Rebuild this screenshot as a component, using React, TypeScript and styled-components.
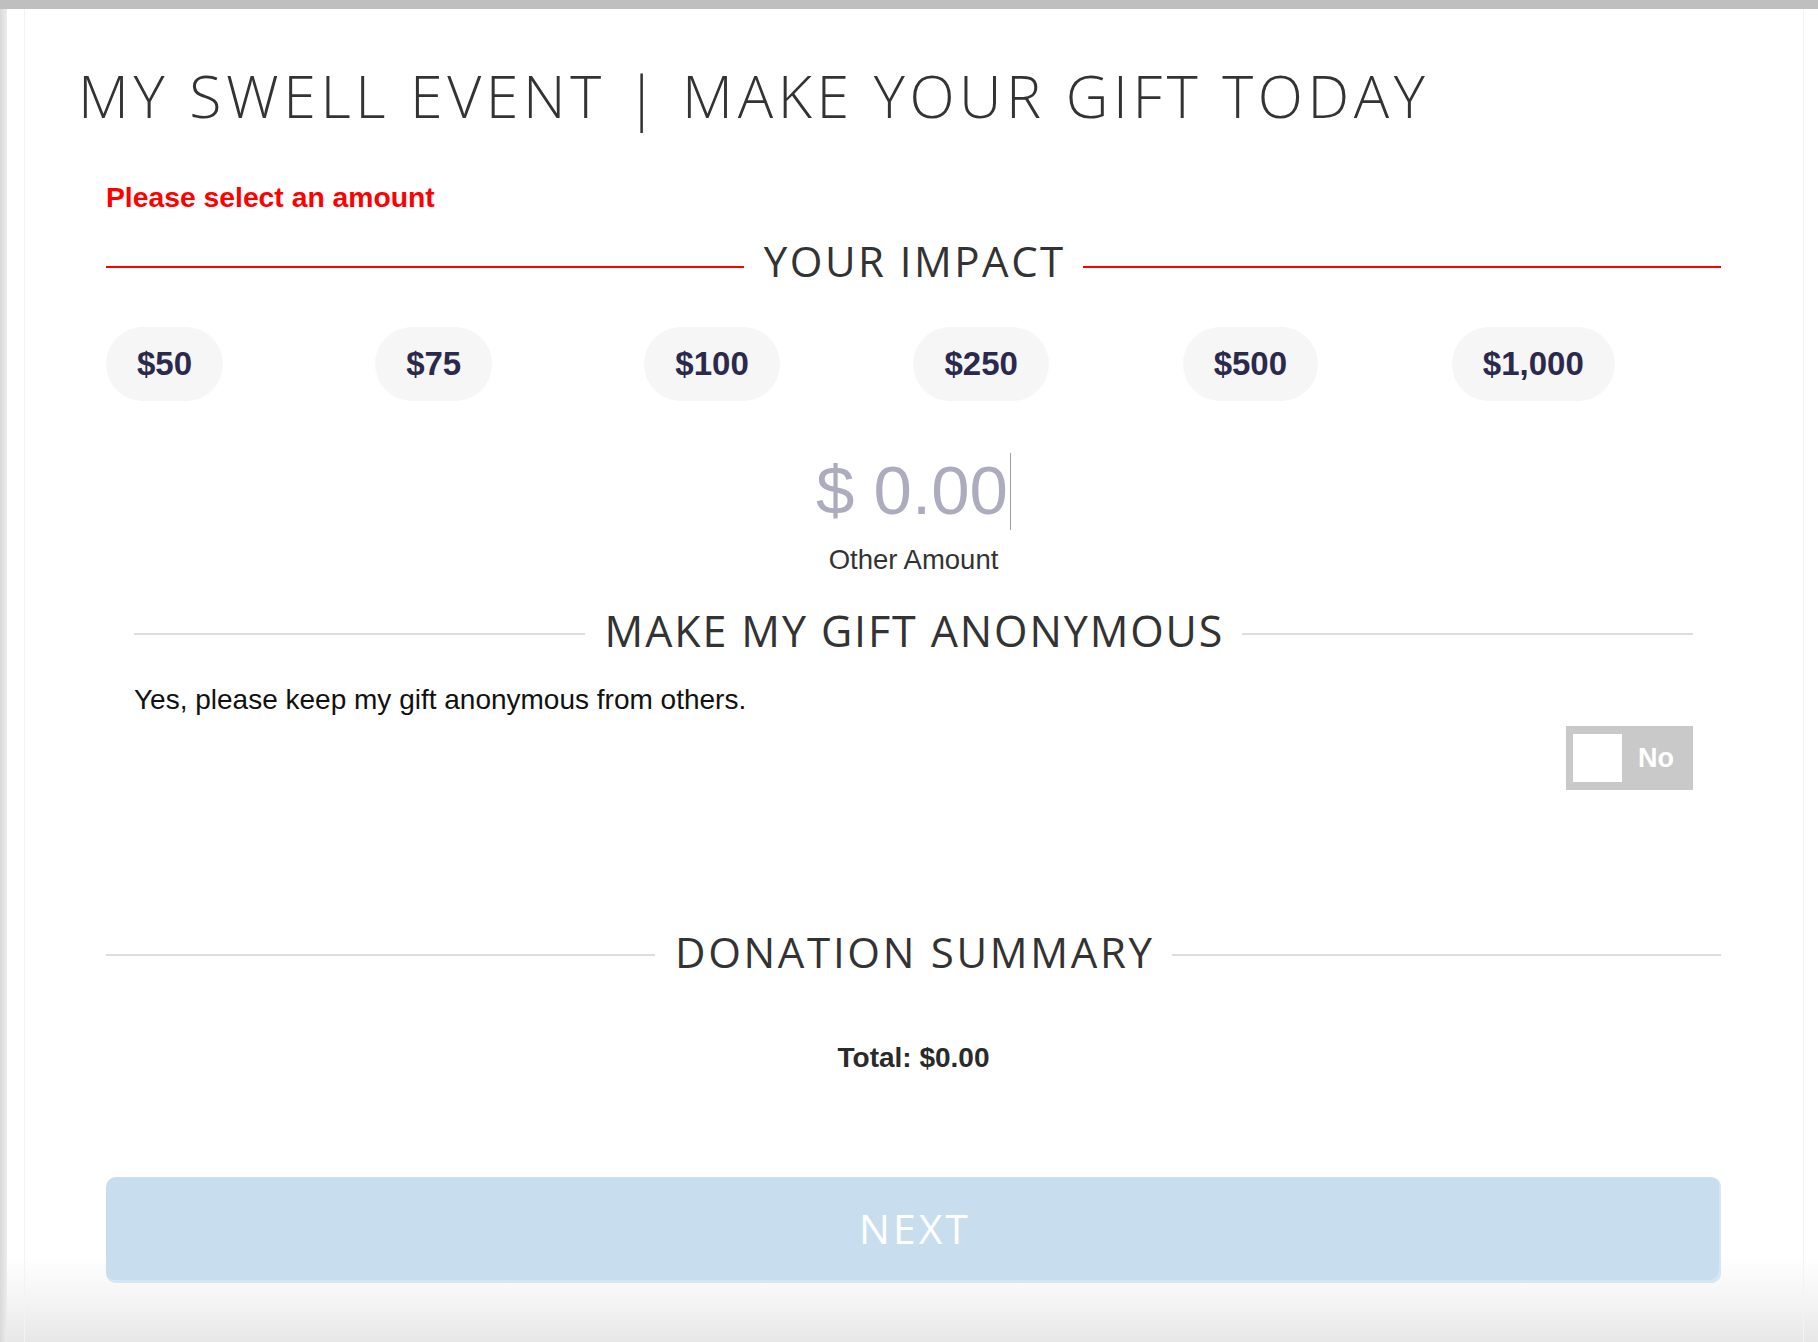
import React from "react";
import styled, { createGlobalStyle } from "styled-components";

const GlobalStyle = createGlobalStyle`
  html, body {
    margin: 0;
    padding: 0;
    background: #ffffff;
  }
  body {
    font-family: "Liberation Sans", Arial, sans-serif;
    color: #333333;
  }
  * { box-sizing: border-box; }
`;

const Page = styled.div`
  display: flex;
  flex-direction: column;
  height: 1342px;
  overflow: hidden;
`;

const TopBar = styled.div`
  height: 9px;
  background: #bfbfbf;
  flex: none;
`;

const Body = styled.div`
  flex: 1;
  display: flex;
  background: linear-gradient(to bottom, #ffffff 0, #ffffff 1245px, #f6f6f6 1285px, #e7e7e7 1333px);
`;

const LeftStrip = styled.div`
  width: 7px;
  flex: none;
  background: linear-gradient(to right, #d9d9d9, #ececec);
`;

const Card = styled.div`
  flex: 1;
  margin: 0 14px 0 17px;
  border-left: 1px solid #f3f3f3;
  border-right: 1px solid #f3f3f3;
  padding-top: 50px;
  display: flex;
  flex-direction: column;
`;

const Title = styled.h1`
  margin: 0 0 0 53px;
  font-family: "Open Sans", sans-serif;
  font-weight: 300;
  font-size: 59px;
  line-height: 72px;
  color: #333333;
  letter-spacing: 4.6px;
  white-space: nowrap;
`;

const Content = styled.div`
  padding: 0 82px 0 81px;
  display: flex;
  flex-direction: column;
`;

const ErrorText = styled.div`
  margin-top: 49px;
  font-weight: 700;
  font-size: 28.3px;
  line-height: 34px;
  color: #ff0000;
`;

const SectionHeader = styled.div<{ $top: number }>`
  display: flex;
  align-items: center;
  gap: 20px;
  margin-top: ${(p) => p.$top}px;
`;

const Rule = styled.div<{ $color: string; $shift: number }>`
  flex: 1;
  height: 2px;
  background: ${(p) => p.$color};
  margin-top: ${(p) => p.$shift}px;
`;

const SectionTitle = styled.h2<{ $size: number; $spacing: number }>`
  margin: 0 ${(p) => -p.$spacing}px 0 0;
  font-family: "Open Sans", sans-serif;
  font-weight: 400;
  font-size: ${(p) => p.$size}px;
  letter-spacing: ${(p) => p.$spacing}px;
  line-height: 50px;
  color: #333333;
  white-space: nowrap;
`;

const AmountGrid = styled.div`
  margin-top: 41px;
  display: grid;
  grid-template-columns: repeat(6, 1fr);
  justify-items: start;
`;

const AmountButton = styled.button`
  height: 74px;
  padding: 0 31px;
  border: none;
  border-radius: 37px;
  background: #f6f6f6;
  font-family: "Liberation Sans", Arial, sans-serif;
  font-weight: 700;
  font-size: 33px;
  line-height: 74px;
  color: #2b2a4c;
  cursor: pointer;
`;

const OtherAmountWrap = styled.div`
  margin-top: 50px;
  display: flex;
  flex-direction: column;
  align-items: center;
`;

const AmountDisplay = styled.div`
  display: flex;
  align-items: center;
  height: 80px;
`;

const AmountText = styled.span`
  font-family: "Liberation Sans", Arial, sans-serif;
  font-size: 69px;
  line-height: 80px;
  color: #acacbe;
`;

const Caret = styled.span`
  width: 1px;
  height: 77px;
  margin-left: 2px;
  background: #9e9eb0;
`;

const OtherLabel = styled.div`
  margin-top: 13px;
  font-size: 27.5px;
  line-height: 31px;
  color: #333333;
`;

const AnonSection = styled.div`
  padding: 0 28px;
  display: flex;
  flex-direction: column;
`;

const AnonText = styled.div`
  margin-top: 27px;
  font-size: 28px;
  line-height: 34px;
  color: #111111;
`;

const ToggleRow = styled.div`
  margin-top: 9px;
  display: flex;
  justify-content: flex-end;
`;

const Toggle = styled.div`
  width: 127px;
  height: 64px;
  background: #c9c9c9;
  display: flex;
  align-items: center;
  padding: 0 19px 0 7px;
  justify-content: space-between;
`;

const Knob = styled.div`
  width: 49px;
  height: 48px;
  background: #ffffff;
`;

const ToggleLabel = styled.span`
  font-weight: 700;
  font-size: 27px;
  color: #ffffff;
`;

const Total = styled.div`
  margin-top: 64px;
  text-align: center;
  font-weight: 700;
  font-size: 28px;
  line-height: 34px;
  color: #2a2a2a;
`;

const NextButton = styled.button`
  margin-top: 102px;
  width: 100%;
  height: 106px;
  border: none;
  border-radius: 10px;
  background: #c8ddee;
  box-shadow: inset -2px -3px 0 #d6e7f3;
  display: flex;
  align-items: center;
  justify-content: center;
  padding: 0 0 5px 3px;
  font-family: "Open Sans", sans-serif;
  font-weight: 400;
  font-size: 41px;
  letter-spacing: 3px;
  line-height: 50px;
  color: #ffffff;
  cursor: pointer;
`;

const amounts = ["$50", "$75", "$100", "$250", "$500", "$1,000"];

export default function App() {
  return (
    <>
      <GlobalStyle />
      <Page>
        <TopBar />
        <Body>
          <LeftStrip />
          <Card>
            <Title>MY SWELL EVENT | MAKE YOUR GIFT TODAY</Title>
            <Content>
              <ErrorText>Please select an amount</ErrorText>
              <SectionHeader $top={22}>
                <Rule $color="#ff0000" $shift={11} />
                <SectionTitle $size={42} $spacing={2.5}>YOUR IMPACT</SectionTitle>
                <Rule $color="#ff0000" $shift={11} />
              </SectionHeader>
              <AmountGrid>
                {amounts.map((a) => (
                  <AmountButton key={a}>{a}</AmountButton>
                ))}
              </AmountGrid>
              <OtherAmountWrap>
                <AmountDisplay>
                  <AmountText>$ 0.00</AmountText>
                  <Caret />
                </AmountDisplay>
                <OtherLabel>Other Amount</OtherLabel>
              </OtherAmountWrap>
              <AnonSection>
                <SectionHeader $top={31}>
                  <Rule $color="#dddddd" $shift={6} />
                  <SectionTitle $size={43} $spacing={1.9}>MAKE MY GIFT ANONYMOUS</SectionTitle>
                  <Rule $color="#dddddd" $shift={6} />
                </SectionHeader>
                <AnonText>Yes, please keep my gift anonymous from others.</AnonText>
                <ToggleRow>
                  <Toggle>
                    <Knob />
                    <ToggleLabel>No</ToggleLabel>
                  </Toggle>
                </ToggleRow>
              </AnonSection>
              <SectionHeader $top={137}>
                <Rule $color="#dddddd" $shift={5} />
                <SectionTitle $size={42} $spacing={2.7}>DONATION SUMMARY</SectionTitle>
                <Rule $color="#dddddd" $shift={5} />
              </SectionHeader>
              <Total>Total: $0.00</Total>
              <NextButton>NEXT</NextButton>
            </Content>
          </Card>
        </Body>
      </Page>
    </>
  );
}
